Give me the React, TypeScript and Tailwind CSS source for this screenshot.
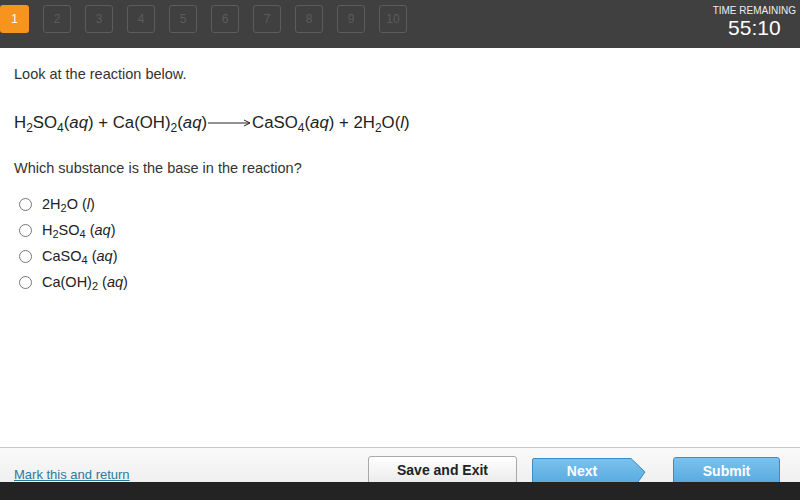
import React from 'react'

const Sub = ({ children, big }: { children: React.ReactNode; big?: boolean }) => (
  <sub className={big ? 'text-[12px] relative top-[4px]' : 'text-[11px] relative top-[3px]'}>{children}</sub>
)

const Arrow = () => (
  <svg width="43" height="10" viewBox="0 0 43 10" className="inline-block mx-[1px] relative top-[-1px]">
    <line x1="0" y1="5" x2="41" y2="5" stroke="#222" strokeWidth="1" />
    <path d="M36 2 L42 5 L36 8" fill="none" stroke="#222" strokeWidth="1" />
  </svg>
)

const App = () => {
  const nums = [2, 3, 4, 5, 6, 7, 8, 9, 10]
  const options: React.ReactNode[] = [
    <>2H<Sub>2</Sub>O (<i>l</i>)</>,
    <>H<Sub>2</Sub>SO<Sub>4</Sub> (<i>aq</i>)</>,
    <>CaSO<Sub>4</Sub> (<i>aq</i>)</>,
    <>Ca(OH)<Sub>2</Sub> (<i>aq</i>)</>,
  ]

  return (
    <div className="w-[800px] h-[500px] flex flex-col bg-white text-[#333] font-['Liberation_Sans',Arial,sans-serif] overflow-hidden">
      {/* Top bar */}
      <div className="h-[48px] bg-[#404040] flex items-start justify-between shrink-0">
        <div className="flex gap-[14px] pt-[5px]">
          <div className="w-[29px] h-[28px] bg-[#f7941d] rounded-[3px] flex items-center justify-center text-white text-[12px]">1</div>
          {nums.map((n) => (
            <div key={n} className="w-[28px] h-[28px] border border-[#5c5c5c] rounded-[3px] flex items-center justify-center text-[#5c5c5c] text-[12px]">
              {n}
            </div>
          ))}
        </div>
        <div className="flex flex-col items-center pr-[4px] pt-[5px] text-white">
          <div className="text-[10px] leading-[11px] text-[#eee]">TIME REMAINING</div>
          <div className="text-[21px] leading-[22px] mt-[1px]">55:10</div>
        </div>
      </div>

      {/* Body */}
      <div className="flex-1 px-[14px] pt-[18px] text-[14.5px]">
        <p className="leading-[16px]">Look at the reaction below.</p>
        <p className="mt-[31px] text-[16.8px] leading-[20px] text-[#222]">
          H<Sub big>2</Sub>SO<Sub big>4</Sub>(<i>aq</i>) + Ca(OH)<Sub big>2</Sub>(<i>aq</i>)<Arrow />CaSO<Sub big>4</Sub>(<i>aq</i>) + 2H<Sub big>2</Sub>O(<i>l</i>)
        </p>
        <p className="mt-[27px] leading-[16px]">Which substance is the base in the reaction?</p>
        <div className="mt-[20px] flex flex-col gap-[10px]">
          {options.map((o, i) => (
            <div key={i} className="flex items-center h-[16px]">
              <span className="w-[13px] h-[13px] rounded-full border border-[#777] ml-[5px] mr-[10px] bg-white"></span>
              <span className="leading-[16px] text-[#222]">{o}</span>
            </div>
          ))}
        </div>
      </div>

      {/* Footer */}
      <div className="shrink-0">
        <div className="h-[35px] border-t border-[#c8c8c8] bg-gradient-to-b from-[#fafafa] to-[#efefef] overflow-hidden flex items-start pl-[14px]">
          <a href="#" className="mt-[19px] text-[13px] leading-[15px] text-[#2b7a9e] underline">Mark this and return</a>
          <div className="ml-auto flex items-start pt-[8px] pr-[20px]">
            <button className="w-[149px] h-[34px] rounded-[3px] border border-[#a8a8a8] bg-gradient-to-b from-white to-[#e6e6e6] text-[14px] font-bold text-[#222] pb-[5px]">
              Save and Exit
            </button>
            <div className="relative ml-[15px] w-[114px] h-[34px] mt-[2px]">
              <svg width="114" height="34" viewBox="0 0 114 34" className="absolute inset-0">
                <defs>
                  <linearGradient id="nb" x1="0" y1="0" x2="0" y2="1">
                    <stop offset="0" stopColor="#7cc2ec" />
                    <stop offset="1" stopColor="#4aa3dc" />
                  </linearGradient>
                </defs>
                <path d="M2 0.5 H99 L113 14 L99 34 H0.5 V2 Q0.5 0.5 2 0.5 Z" fill="url(#nb)" stroke="#3a8cc4" strokeWidth="1" />
              </svg>
              <span className="absolute left-0 w-[100px] top-[3px] text-center text-white font-bold text-[14px]">Next</span>
            </div>
            <button className="ml-[27px] w-[107px] h-[34px] mt-[1px] rounded-[3px] border border-[#3a8cc4] bg-gradient-to-b from-[#7cc2ec] to-[#4aa3dc] text-white font-bold text-[14px] pb-[5px]">
              Submit
            </button>
          </div>
        </div>
        <div className="h-[18px] bg-[#232323]"></div>
      </div>
    </div>
  )
}

export default App
